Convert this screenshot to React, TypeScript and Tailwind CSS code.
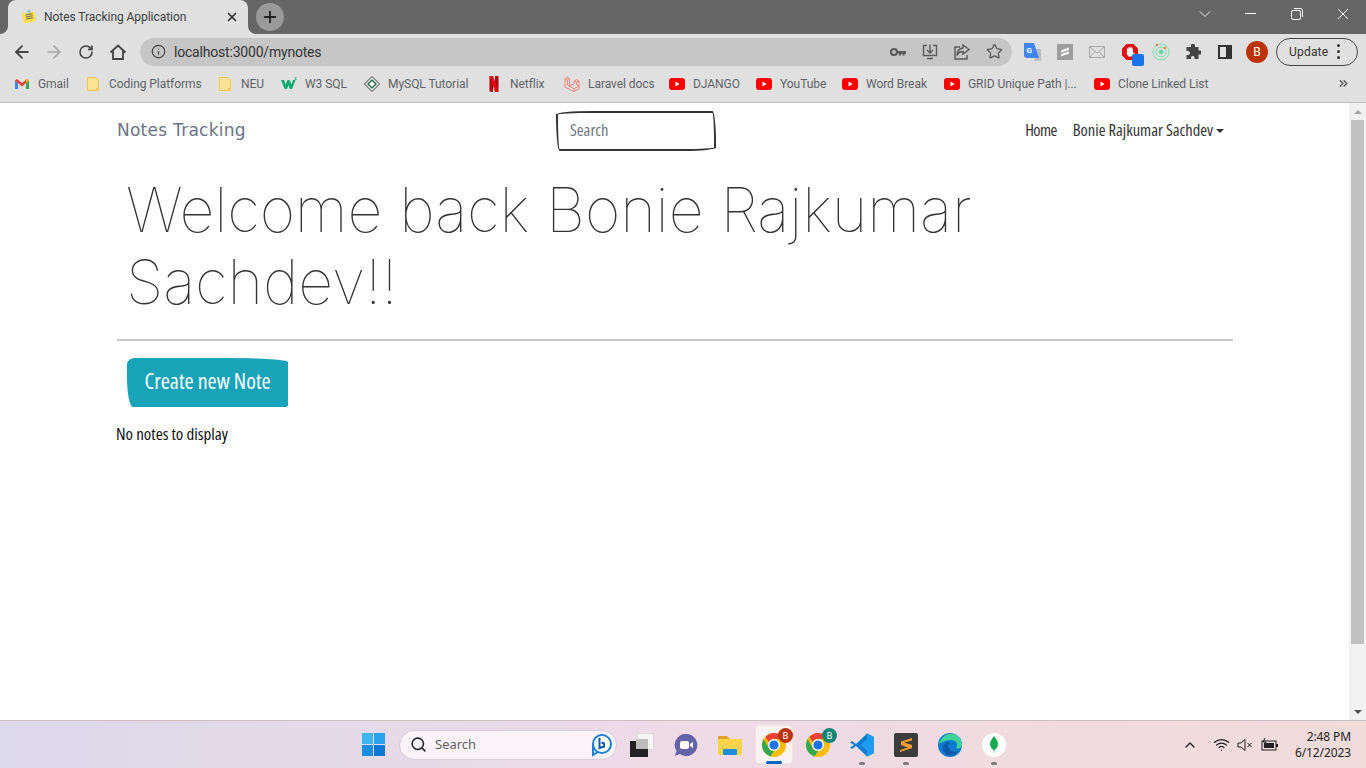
import React from "react";
import { ArrowLeft, ArrowRight, RotateCw, Info, Star, X, Plus, Search, ChevronUp, Wifi, ChevronsRight } from "lucide-react";

const ui = "font-['Roboto','Noto_Sans',sans-serif]";
const seg = "font-['Noto_Sans','Open_Sans',sans-serif]";
const hand = "font-['Open_Sans','Noto_Sans',sans-serif] [font-stretch:75%]";
const sketch = "rounded-[255px_25px_225px_25px/25px_225px_25px_255px]";

const Yt = () => (
  <svg width="16" height="16" viewBox="0 0 16 16"><rect y="2" width="16" height="12" rx="3" fill="#f00" /><path d="M6.500 5.600 10.600 8l-4.100 2.400z" fill="#fff" /></svg>
);
const Folder = () => (
  <svg width="16" height="16" viewBox="0 0 16 16"><path d="M2.500 1.500h8.500l2.500 2.500v10.500h-11z" fill="#fde293" stroke="#f2c94c" strokeWidth="1" /><rect x="11" y="12" width="2.500" height="2.500" fill="#f2c94c" /></svg>
);
const Gmail = () => (
  <svg width="16" height="16" viewBox="0 0 16 16"><path d="M1 4v9h3V7z" fill="#4285f4" /><path d="M15 4v9h-3V7z" fill="#34a853" /><path d="M1 4.500 3 3l5 4 5-4 2 1.500L8 10.500z" fill="#ea4335" /><path d="M12 7l3-2.500V4l-2-1-1 1z" fill="#fbbc04" /></svg>
);
const W3 = () => (
  <svg width="16" height="16" viewBox="0 0 16 16"><path d="M0 4h3l1.500 4.500L6.500 4h2l2 4.500L12 4h2.500L11 13H8.800L7.500 9 6 13H3.700z" fill="#04aa6d" /><path d="M13.500 1h2v.6l-.9.9.9.6v1h-2v-.6h1.300l-.8-.7.800-1.200h-1.300z" fill="#04aa6d" /></svg>
);
const MySql = () => (
  <svg width="16" height="16" viewBox="0 0 16 16"><path d="M8 .5 15.500 8 8 15.500.5 8z" fill="#f5f5f5" stroke="#333" strokeWidth="1" /><path d="M8 4 12 8 8 12 4 8z" fill="none" stroke="#2f6b4f" strokeWidth="1.500" /></svg>
);
const Netflix = () => (
  <svg width="16" height="16" viewBox="0 0 16 16"><path d="M3.500 0H7v16l-3.500-.5z" fill="#b1060f" /><path d="M9 0h3.500v15.500L9 16z" fill="#b1060f" /><path d="M3.500 0H7l5.500 15.500L9 16z" fill="#e50914" /></svg>
);
const Laravel = () => (
  <svg width="16" height="16" viewBox="0 0 16 16" fill="none" stroke="#f4837b" strokeWidth="1" strokeLinejoin="round"><path d="M1 2.500 3.300 1.200 5.600 2.500V10.200L10.200 12.800 15 10.200V5L12.700 3.700 10.200 5V7.600L5.600 10.200" /><path d="M1 2.500V11.200L10.200 15.500 15 12.800V10.200" /><path d="M1 2.500 3.300 3.800 5.600 2.500M3.300 3.800V9L5.600 10.200" /><path d="M10.200 5 12.700 6.300 15 5M12.700 6.300V9L15 10.200M10.200 12.800V15.500" /></svg>
);

const bookmarks: { w: string; icon: React.ReactNode; label: string }[] = [
  { w: "w-[71px]", icon: <Gmail />, label: "Gmail" },
  { w: "w-[132px]", icon: <Folder />, label: "Coding Platforms" },
  { w: "w-[64px]", icon: <Folder />, label: "NEU" },
  { w: "w-[83px]", icon: <W3 />, label: "W3 SQL" },
  { w: "w-[122px]", icon: <MySql />, label: "MySQL Tutorial" },
  { w: "w-[78px]", icon: <Netflix />, label: "Netflix" },
  { w: "w-[105px]", icon: <Laravel />, label: "Laravel docs" },
  { w: "w-[87px]", icon: <Yt />, label: "DJANGO" },
  { w: "w-[86px]", icon: <Yt />, label: "YouTube" },
  { w: "w-[102px]", icon: <Yt />, label: "Word Break" },
  { w: "w-[150px]", icon: <Yt />, label: "GRID Unique Path |..." },
  { w: "w-[140px]", icon: <Yt />, label: "Clone Linked List" },
];

const ToolBtn = ({ children }: { children: React.ReactNode }) => (
  <div className="w-[32px] h-[32px] flex items-center justify-center shrink-0">{children}</div>
);

const Chrome = ({ badge, badgeColor }: { badge: string; badgeColor: string }) => (
  <div className="relative w-[24px] h-[24px]">
    <svg width="24" height="24" viewBox="0 0 24 24">
      <circle cx="12" cy="12" r="12" fill="#fbbc04" />
      <path d="M12 0a12 12 0 0 1 10.400 6H12a6 6 0 0 0-5.200 3L3.400 3.900A12 12 0 0 1 12 0z" fill="#ea4335" />
      <path d="M1.600 6 6.800 15A6 6 0 0 0 12 18l-3.400 5.500A12 12 0 0 1 1.600 6z" fill="#34a853" />
      <circle cx="12" cy="12" r="6" fill="#fff" />
      <circle cx="12" cy="12" r="4.600" fill="#1a73e8" />
    </svg>
    <span className={`absolute -top-[5px] -right-[7px] w-[15px] h-[15px] rounded-full text-[9px] leading-[15px] text-center text-white ${badgeColor}`}>{badge}</span>
  </div>
);

const TaskSlot = ({ children, dot, active }: { children: React.ReactNode; dot?: boolean; active?: boolean }) => (
  <div className="relative w-[44px] h-[47px] flex items-center justify-center shrink-0">
    {active && <div className="absolute left-[3px] top-[4px] w-[38px] h-[39px] rounded-[4px] bg-[#faf3f3] border border-[#efe3e3]" />}
    <div className="relative">{children}</div>
    {dot && <div className="absolute left-[19px] top-[41px] w-[6px] h-[3px] rounded-full bg-[#7f7a7c]" />}
    {active && <div className="absolute left-[14px] top-[40px] w-[16px] h-[3px] rounded-full bg-[#0067c0]" />}
  </div>
);

export default function App() {
  return (
    <div className={`w-[1366px] h-[768px] flex flex-col overflow-hidden bg-white ${ui}`}>
      {/* Tab strip */}
      <div className="h-[34px] bg-[#666666] flex shrink-0">
        <div className="relative ml-[8px] w-[240px] h-[34px] bg-[#e0e0e0] rounded-t-[8px] flex items-center pl-[12px] pr-[9px]">
          <svg className="absolute -left-[8px] bottom-0" width="8" height="8" viewBox="0 0 8 8"><path d="M8 0v8H0a8 8 0 0 0 8-8z" fill="#e0e0e0" /></svg>
          <svg className="absolute -right-[8px] bottom-0" width="8" height="8" viewBox="0 0 8 8"><path d="M0 0v8h8a8 8 0 0 1-8-8z" fill="#e0e0e0" /></svg>
          <svg width="16" height="16" viewBox="0 0 16 16" className="shrink-0 ml-[1px]"><path d="M1 4.500 13.500 2.500 15 12 3 14.500z" fill="#fde047" /><path d="M4.500 6l7-1.200M4.800 8l7-1.200M5.100 10l7-1.200" stroke="#666" strokeWidth="1" /><circle cx="8" cy="2.500" r="1.800" fill="#93c5fd" /></svg>
          <span className="ml-[7px] text-[12px] tracking-[-0.05px] text-[#3c4043] whitespace-nowrap flex-1">Notes Tracking Application</span>
          <X size={14} strokeWidth={3} className="text-[#333]" />
        </div>
        <div className="ml-[8px] mt-[3px] w-[28px] h-[28px] rounded-full bg-[#9a9a9a] flex items-center justify-center">
          <Plus size={18} strokeWidth={2.500} className="text-[#222]" />
        </div>
        <div className="ml-auto flex h-[28px] items-center">
          <div className="w-[46px] flex justify-center">
            <svg width="12" height="8" viewBox="0 0 12 8" fill="none" stroke="#eee" strokeWidth="1"><path d="M1 1.500 6 6.500 11 1.500" /></svg>
          </div>
          <div className="w-[46px] flex justify-center">
            <svg width="12" height="2" viewBox="0 0 12 2"><rect width="11" height="1" fill="#fff" /></svg>
          </div>
          <div className="w-[46px] flex justify-center">
            <svg width="12" height="12" viewBox="0 0 12 12" fill="none" stroke="#fff" strokeWidth="1"><rect x=".5" y="2.500" width="9" height="9" rx="1.500" /><path d="M3 .500H9.500a2 2 0 0 1 2 2V9" /></svg>
          </div>
          <div className="w-[46px] flex justify-center">
            <svg width="12" height="12" viewBox="0 0 12 12" stroke="#fff" strokeWidth="1"><path d="M1 1 11 11M11 1 1 11" /></svg>
          </div>
        </div>
      </div>

      {/* Toolbar */}
      <div className="h-[35px] bg-[#e0e0e0] flex items-center pl-[6px] shrink-0">
        <ToolBtn><ArrowLeft size={20} strokeWidth={2.200} className="text-[#444]" /></ToolBtn>
        <ToolBtn><ArrowRight size={20} strokeWidth={2} className="text-[#a5a5a5]" /></ToolBtn>
        <ToolBtn><RotateCw size={16} strokeWidth={2.400} className="text-[#444]" /></ToolBtn>
        <ToolBtn>
          <svg width="18" height="18" viewBox="0 0 18 18" fill="none" stroke="#444" strokeWidth="1.800"><path d="M1.500 9.500 9 2.500l7.500 7M4 8v8h10V8" /></svg>
        </ToolBtn>
        <div className="ml-[6px] w-[872px] h-[28px] rounded-full bg-[#c6c6c6] flex items-center pl-[11px] pr-[9px]">
          <Info size={15} strokeWidth={2} className="text-[#444]" />
          <span className="ml-[8px] mt-[1px] text-[14px] tracking-[-0.2px] text-[#333] flex-1">localhost:3000/mynotes</span>
          <div className="flex items-center gap-[12px] text-[#5a5a5a]">
            <svg width="16" height="10" viewBox="0 0 16 10" className="mr-[2px]"><circle cx="4" cy="5" r="3" fill="none" stroke="#5a5a5a" strokeWidth="2.200" /><path d="M7 4h9v3h-1.500v1.500h-2V7H11v1.500H9V6.500H7z" fill="#5a5a5a" /></svg>
            <svg width="20" height="20" viewBox="0 0 20 20" fill="none" stroke="#5a5a5a" strokeWidth="1.400"><path d="M7 3.500H3.500v10h13v-10H13M10 2.500v8M7 8l3 3 3-3M7 16.500h6" /></svg>
            <svg width="20" height="20" viewBox="0 0 20 20" fill="none" stroke="#5a5a5a" strokeWidth="1.400"><path d="M8 5H3v12h12v-4M11 3l6 4.500-6 4.500V9.500c-3 0-5 1-6 4 0-4 2-7 6-7.500z" /></svg>
            <Star size={17} strokeWidth={1.800} className="ml-[2px]" />
          </div>
        </div>
        <div className="ml-[5px] flex items-center">
          <ToolBtn>
            <svg width="18" height="20" viewBox="0 0 18 20"><path d="M9 7h8v12h-6z" fill="#bdbdbd" /><path d="M0 1h10l5 15H3a3 3 0 0 1-3-3z" fill="#4285f4" /><text x="2.500" y="11" fontSize="8" fontWeight="700" fill="#fff">G</text></svg>
          </ToolBtn>
          <ToolBtn>
            <svg width="16" height="16" viewBox="0 0 16 16"><rect width="16" height="16" fill="#9e9e9e" /><path d="M12 3.500 4 6.500v2l8-2.500zM12 7.500 4 10v2.500l8-3z" fill="#fff" /></svg>
          </ToolBtn>
          <ToolBtn>
            <svg width="16" height="12" viewBox="0 0 16 12" fill="none" stroke="#a8a8a8" strokeWidth="1"><rect x=".5" y=".5" width="15" height="11" /><path d="M.5.500 8 7l7.500-6.500M.5 11.500 6 5.500M15.500 11.500 10 5.500" /></svg>
          </ToolBtn>
          <ToolBtn>
            <div className="relative w-[22px] h-[22px] ml-[8px] mt-[6px]">
              <svg width="16" height="16" viewBox="0 0 16 16" className="absolute left-0 top-0"><path d="M4.500 0h7L16 4.500v7L11.500 16h-7L0 11.500v-7z" fill="#e01010" /><path d="M5 4.500h1.500V3h1.200v1h1V3H10v1.500h1v5l2-1-2 4H6.500L4 9l1 .5z" fill="#fff" /></svg>
              <div className="absolute left-[10px] top-[10px] w-[12px] h-[12px] rounded-[2px] bg-[#1a73e8]" />
            </div>
          </ToolBtn>
          <ToolBtn>
            <svg width="18" height="18" viewBox="0 0 18 18" fill="none" stroke="#7be0b0" strokeWidth="1"><circle cx="9" cy="9" r="8" /><circle cx="9" cy="9" r="5" /><circle cx="9" cy="9" r="2" fill="#5ad29b" /><circle cx="5" cy="2" r="1.200" fill="#f08040" stroke="none" /><circle cx="13" cy="5" r="1.200" fill="#f08040" stroke="none" /></svg>
          </ToolBtn>
          <ToolBtn>
            <svg width="16" height="16" viewBox="0 0 16 16"><path d="M6 1.500a2 2 0 0 1 4 0V3h3.500v3.500H15a2 2 0 0 1 0 4h-1.500V15H9.500v-1.500a1.800 1.800 0 0 0-3.500 0V15H1.500v-4H3a2 2 0 0 0 0-4H1.500V3H6z" fill="#444" /></svg>
          </ToolBtn>
          <ToolBtn>
            <svg width="14" height="14" viewBox="0 0 14 14"><path d="M0 0h14v14H0zM2 2v10h6V2z" fill="#333" fillRule="evenodd" /></svg>
          </ToolBtn>
          <ToolBtn>
            <div className="w-[22px] h-[22px] rounded-full bg-[#bb3307] text-white text-[12px] leading-[22px] text-center">B</div>
          </ToolBtn>
        </div>
        <div className="ml-[3px] w-[82px] h-[28px] rounded-full border border-[#444] flex items-center pl-[12px] text-[12px] tracking-[0.2px] text-[#333]">
          Update
          <div className="ml-[9px] flex flex-col gap-[3px]">
            <span className="block w-[3px] h-[3px] rounded-full bg-[#333]" />
            <span className="block w-[3px] h-[3px] rounded-full bg-[#333]" />
            <span className="block w-[3px] h-[3px] rounded-full bg-[#333]" />
          </div>
        </div>
      </div>

      {/* Bookmarks */}
      <div className="h-[34px] bg-[#e0e0e0] border-b border-[#bcbcbc] flex items-center pl-[14px] shrink-0 pb-[4px]">
        {bookmarks.map((b) => (
          <div key={b.label} className={`${b.w} flex items-center gap-[8px] shrink-0`}>
            {b.icon}
            <span className="text-[12px] tracking-[-0.05px] text-[#5f6368] whitespace-nowrap">{b.label}</span>
          </div>
        ))}
        <ChevronsRight size={13} strokeWidth={2.500} className="ml-[103px] text-[#555]" />
      </div>

      {/* Page */}
      <div className="h-[617px] flex shrink-0">
        <div className="flex-1 pl-[117px] pr-[116px]">
          <nav className="h-[55px] flex items-center">
            <a className="w-[440px] font-['DejaVu_Sans',sans-serif] text-[17px] tracking-[0.25px] text-[#6c7385]">Notes Tracking</a>
            <div className={`-ml-[1px] w-[160px] h-[40px] border-2 border-[#333] ${sketch} flex items-center pl-[12px] pb-[1px] text-[16.500px] text-[#6c757d] ${hand}`}>Search</div>
            <div className={`ml-auto mr-[9px] flex items-center text-[16.500px] text-[#333] ${hand}`}>
              <span className="tracking-[-0.6px]">Home</span>
              <span className="ml-[16px]">Bonie Rajkumar Sachdev</span>
              <span className="ml-[3px] w-0 h-0 border-x-[4px] border-x-transparent border-t-[4px] border-t-[#333]" />
            </div>
          </nav>
          <div className="pl-[9px] pt-[16px]">
            <h1 className="font-['Inter',sans-serif] font-thin text-[61px] leading-[72px] tracking-[-0.15px] text-[#333] w-[1000px]">Welcome back Bonie Rajkumar Sachdev!!</h1>
          </div>
          <hr className="mt-[21px] border-0 h-[2px] bg-[#c8c8c8]" />
          <div className={`mt-[17px] ml-[10px] w-[161px] h-[49px] pb-[4px] bg-[#18a3b9] rounded-[8px_60px_2px_6px/6px_4px_2px_30px] flex items-center justify-center text-[22px] text-white ${hand}`}>Create new Note</div>
          <p className={`mt-[14px] -ml-[1px] text-[17px] text-[#111] ${hand}`}>No notes to display</p>
        </div>
        <div className="w-[17px] bg-[#f1f1f1] flex flex-col items-center shrink-0">
          <div className="h-[17px] flex items-center justify-center"><span className="w-0 h-0 border-x-[4px] border-x-transparent border-b-[4px] border-b-[#a3a3a3]" /></div>
          <div className="w-[13px] h-[524px] bg-[#c1c1c1]" />
          <div className="flex-1" />
          <div className="h-[17px] flex items-center justify-center"><span className="w-0 h-0 border-x-[4px] border-x-transparent border-t-[4px] border-t-[#505050]" /></div>
        </div>
      </div>

      {/* Taskbar */}
      <div className={`h-[48px] border-t border-[#cbbfc2] bg-gradient-to-r from-[#dcd9ea] via-[#eedbe6] to-[#f1dcda] flex items-center pl-[351px] shrink-0 ${seg}`}>
        <TaskSlot>
          <div className="grid grid-cols-2 gap-[1px] w-[23px] h-[23px]">
            <div className="bg-[#3fb5f0]" /><div className="bg-[#2aa3ea]" /><div className="bg-[#1a8ee0]" /><div className="bg-[#0a78d4]" />
          </div>
        </TaskSlot>
        <div className="ml-[4px] w-[218px] h-[30px] rounded-full bg-[#fbf3f8] border border-[#d6cdd6] flex items-center pl-[10px] pr-[4px] shrink-0">
          <Search size={17} strokeWidth={2.200} className="text-[#222]" />
          <span className="ml-[8px] text-[13px] text-[#5f5f5f] flex-1">Search</span>
          <svg width="21" height="24" viewBox="0 0 21 24" fill="none"><circle cx="11" cy="11" r="9" stroke="#1b7fd6" strokeWidth="2" fill="#fff" /><path d="M2 11v11l5-3" stroke="#1b7fd6" strokeWidth="2" /><path d="M8.500 5v10l4.500-1.500v-3L10.500 9.500" stroke="#1259a8" strokeWidth="2" /></svg>
        </div>
        <div className="ml-[3px] flex items-center">
          <TaskSlot>
            <div className="relative w-[24px] h-[24px]">
              <div className="absolute right-0 top-0 w-[17px] h-[17px] bg-[#f5f5f5] border border-[#ddd]" />
              <div className="absolute left-0 bottom-0 w-[18px] h-[16px] bg-[#222]" />
              <div className="absolute left-[6px] top-[6px] w-[12px] h-[10px] bg-[#bdbdbd]" />
            </div>
          </TaskSlot>
          <TaskSlot>
            <svg width="24" height="24" viewBox="0 0 24 24"><path d="M12 1a11 11 0 1 1-6 20l-5 2 1.500-5A11 11 0 0 1 12 1z" fill="#6264a7" /><rect x="6" y="8" width="9" height="8" rx="2" fill="#fff" /><path d="M16 11l3-2v6l-3-2z" fill="#fff" /></svg>
          </TaskSlot>
          <TaskSlot>
            <svg width="24" height="24" viewBox="0 0 24 24"><path d="M0 3h9l3 3h12v3H0z" fill="#e0a32e" /><rect y="6" width="24" height="16" rx="1" fill="#fcd34d" /><rect x="5" y="16" width="14" height="6" rx="1" fill="#1a8fd9" /></svg>
          </TaskSlot>
          <TaskSlot active><Chrome badge="B" badgeColor="bg-[#bb3307]" /></TaskSlot>
          <TaskSlot><Chrome badge="B" badgeColor="bg-[#0f8577]" /></TaskSlot>
          <TaskSlot dot>
            <svg width="24" height="24" viewBox="0 0 24 24"><path d="M17 .500 24 4v16l-7 3.500L6 13l-4 3-2-1.500L4 12 0 9.500 2 8l4 3z" fill="#0e7fd0" /><path d="M17 .500 24 4v16l-7 3.500zM17 6.500 10.500 12 17 17.500z" fill="#1f9cf0" fillRule="evenodd" /></svg>
          </TaskSlot>
          <TaskSlot dot>
            <div className="w-[24px] h-[24px] rounded-[2px] bg-[#3c3c3c] flex items-center justify-center">
              <svg width="14" height="16" viewBox="0 0 14 16"><path d="M13 1 2 4.500v3.500l11 3.500V8L5 5.500l8-2zM1 8l8 2.500L1 13v2l12-4" fill="#f59e2c" /></svg>
            </div>
          </TaskSlot>
          <TaskSlot>
            <svg width="24" height="24" viewBox="0 0 24 24"><circle cx="12" cy="12" r="12" fill="#0c7ccf" /><path d="M1 11C3 3 10 0 15 1c6 1 9 6 9 11 0 3-3 4-6 3 3-4 0-8-5-8-5 0-9 2-12 4z" fill="#41d19a" /><path d="M5 15c0-5 5-7 8-5-3 0-4 4-1 7 2 2 6 2 9 1-3 4-9 6-13 3-2-1-3-4-3-6z" fill="#0f5aa8" /></svg>
          </TaskSlot>
          <TaskSlot dot>
            <div className="w-[24px] h-[24px] rounded-full bg-white flex items-center justify-center">
              <svg width="8" height="18" viewBox="0 0 8 18"><path d="M4 0c2 3 4 5 4 8s-2 5-3.500 6L4 18l-.5-4C2 13 0 11 0 8s2-5 4-8z" fill="#13aa52" /></svg>
            </div>
          </TaskSlot>
        </div>
        <div className="ml-auto flex items-center pr-[15px]">
          <ChevronUp size={16} strokeWidth={2} className="text-[#222]" />
          <Wifi size={17} strokeWidth={1.800} className="ml-[15px] text-[#222]" />
          <svg width="16" height="14" viewBox="0 0 16 14" fill="none" stroke="#222" strokeWidth="1" className="ml-[7px]"><path d="M1 5h3l4-3.500v11L4 9H1zM10.500 5l4 4M14.500 5l-4 4" /></svg>
          <svg width="18" height="14" viewBox="0 0 18 14" className="ml-[8px]"><rect x="1" y="3" width="14" height="9" fill="none" stroke="#222" /><rect x="3" y="5" width="10" height="5" fill="#222" /><rect x="15" y="6" width="2" height="3" fill="#222" /><path d="M4 0 2 4h3L3 8" stroke="#222" fill="none" /></svg>
          <div className="ml-[16px] text-[12px] leading-[16px] tracking-[-0.1px] text-right text-[#222]">
            <div>2:48 PM</div>
            <div>6/12/2023</div>
          </div>
        </div>
      </div>
    </div>
  );
}
